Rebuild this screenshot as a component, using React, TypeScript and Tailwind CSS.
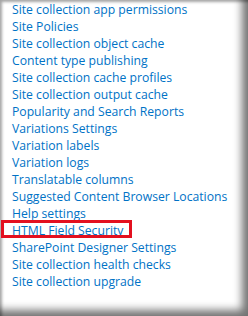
export default function App() {
  const items = [
    "Site collection app permissions",
    "Site Policies",
    "Site collection object cache",
    "Content type publishing",
    "Site collection cache profiles",
    "Site collection output cache",
    "Popularity and Search Reports",
    "Variations Settings",
    "Variation labels",
    "Variation logs",
    "Translatable columns",
    "Suggested Content Browser Locations",
    "Help settings",
    "HTML Field Security",
    "SharePoint Designer Settings",
    "Site collection health checks",
    "Site collection upgrade",
  ];
  return (
    <div className="relative w-[248px] h-[316px] bg-white overflow-hidden shadow-[inset_2px_2px_3px_rgba(0,0,0,0.35),inset_-7px_-7px_8px_-1px_rgba(0,0,0,0.55)]">
      <ul className="pl-[12px] pt-[1px] flex flex-col">
        {items.map((t) => (
          <li
            key={t}
            className="h-[17px] leading-[17px] text-[12.2px] text-[#0072c6] whitespace-nowrap"
            style={{ fontFamily: '"Open Sans", "Noto Sans", sans-serif' }}
          >
            {t}
          </li>
        ))}
      </ul>
      <div className="absolute left-[1px] top-[220px] w-[131px] h-[18px] border-[3px] border-[#e3101f]" />
    </div>
  );
}
